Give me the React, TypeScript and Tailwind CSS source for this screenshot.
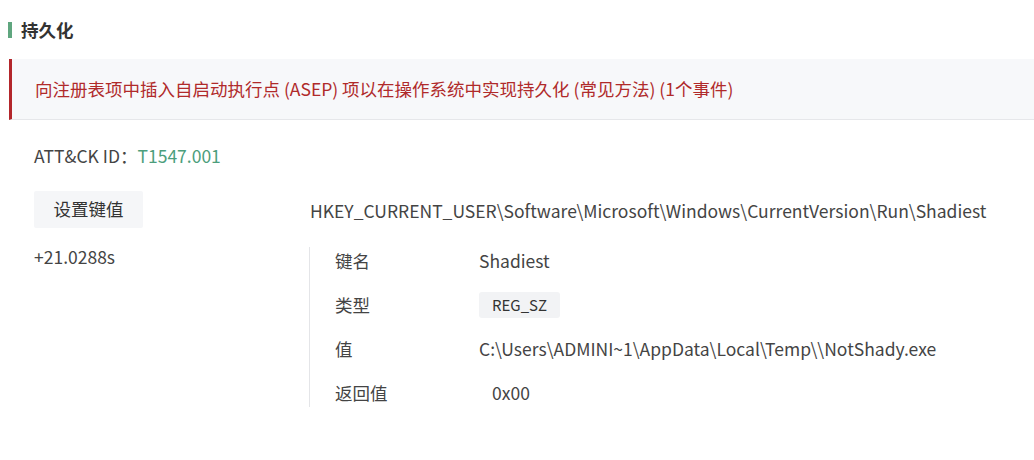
const font = { fontFamily: '"Noto Sans CJK SC", "Noto Sans", sans-serif' };

const details: { label: string; value: string; tag?: boolean; pad?: boolean }[] = [
  { label: '键名', value: 'Shadiest' },
  { label: '类型', value: 'REG_SZ', tag: true },
  { label: '值', value: 'C:\\Users\\ADMINI~1\\AppData\\Local\\Temp\\\\NotShady.exe' },
  { label: '返回值', value: '0x00', pad: true },
];

export default function App() {
  return (
    <div className="h-[460px] w-[1034px] overflow-hidden bg-white text-[17.5px] text-[#333]" style={font}>
      <div className="flex items-center gap-[9px] pl-[8px] pt-[18px]">
        <span className="h-[16px] w-[4px] bg-[#5fa67f]" />
        <h3 className="font-semibold leading-[24px] text-[#333]">持久化</h3>
      </div>

      <div className="ml-[9px] mt-[17px] flex h-[61px] items-center border-b border-l-[3px] border-b-[#e6e7ea] border-l-[#b3262b] bg-[#f7f8fa] pl-[23px]">
        <p className="text-[#b02a2a]">
          向注册表项中插入自启动执行点 (ASEP) 项以在操作系统中实现持久化 (常见方法) (1个事件)
        </p>
      </div>

      <p className="ml-[34px] mt-[24px] leading-[24px] text-[#444]">
        ATT&amp;CK ID：<span className="text-[#4c9e7c]">T1547.001</span>
      </p>

      <div className="ml-[34px] mt-[11px] flex">
        <div className="w-[276px] shrink-0 pt-[12px]">
          <div className="flex h-[37px] w-[109px] items-center justify-center rounded-[2px] bg-[#f5f6f8] text-[#333]">
            设置键值
          </div>
          <p className="mt-[17px] leading-[24px] text-[#444]">+21.0288s</p>
        </div>

        <div className="flex-1">
          <p className="pt-[20px] leading-[24px] text-[#444]">
            HKEY_CURRENT_USER\Software\Microsoft\Windows\CurrentVersion\Run\Shadiest
          </p>
          <div className="ml-[-1px] mt-[24px] flex flex-col gap-[12px] border-l border-[#e4e5e8] pb-[0px] pl-[25px]">
            {details.map((row, i) => (
              <div
                key={row.label}
                className={`flex h-[32px] items-center text-[#444] ${i === 0 ? 'mt-[-2px]' : ''} ${i === details.length - 1 ? 'mb-[-2px]' : ''}`}
              >
                <span className="w-[144px] shrink-0">{row.label}</span>
                {row.tag ? (
                  <span className="flex h-[26px] items-center rounded-[3px] bg-[#f2f3f5] px-[13px] text-[15px] text-[#333]">
                    {row.value}
                  </span>
                ) : (
                  <span className={row.pad ? 'pl-[13px]' : ''}>{row.value}</span>
                )}
              </div>
            ))}
          </div>
        </div>
      </div>
    </div>
  );
}
